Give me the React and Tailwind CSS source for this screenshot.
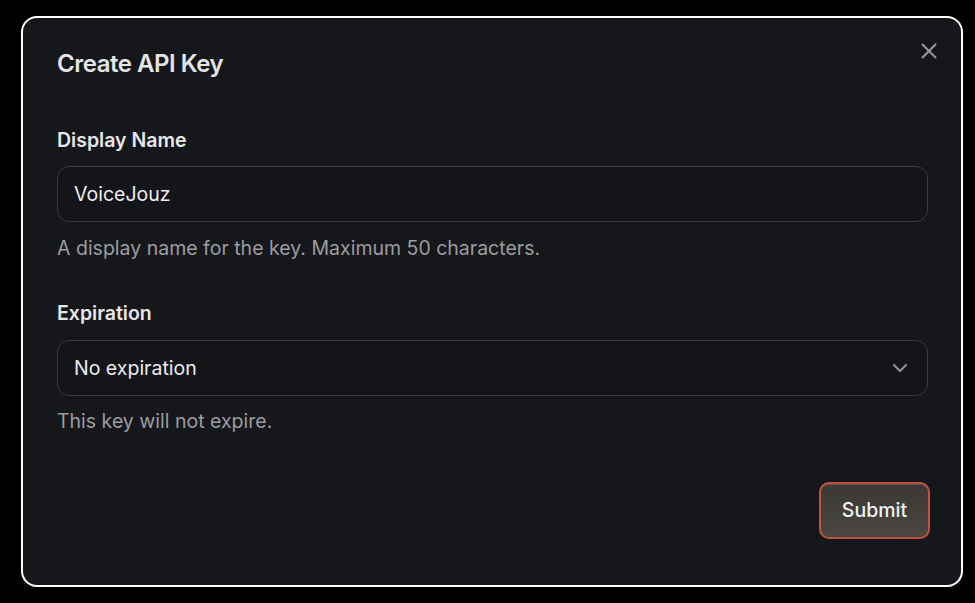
import { X, ChevronDown } from 'lucide-react'

const labelCls = 'block text-[19.5px] leading-[27px] font-semibold text-[#e6e6e8]'
const fieldCls = 'w-full h-[56px] px-[16px] pt-[2px] rounded-[12px] border border-[#3a3b40] bg-[#141519] text-[19.5px] text-[#ececee] flex items-center'
const helpCls = 'text-[19.5px] leading-[27px] text-[#9c9ca1]'

export default function App() {
  return (
    <div className="w-[975px] h-[603px] bg-black pt-[16px] pl-[21px]" style={{ fontFamily: 'Inter, "Noto Sans", sans-serif' }}>
      <div className="relative w-[942px] h-[571px] rounded-[16px] border-2 border-white bg-[#16171b] pt-[30px] pl-[34px] pr-[31px]">
        <button className="absolute top-[20px] right-[19px] text-[#9a9a9f]">
          <X size={26} strokeWidth={1.8} />
        </button>

        <h2 className="text-[24px] leading-[32px] font-semibold text-[#e4e4e6] tracking-[-0.02em]">Create API Key</h2>

        <div className="mt-[47px] pr-[2px]">
          <label className={labelCls}>Display Name</label>
          <div className={`${fieldCls} mt-[12px]`}>VoiceJouz</div>
          <p className={`${helpCls} mt-[13px]`}>A display name for the key. Maximum 50 characters.</p>
        </div>

        <div className="mt-[38px] pr-[2px]">
          <label className={labelCls}>Expiration</label>
          <div className={`${fieldCls} mt-[13px] justify-between`}>
            <span>No expiration</span>
            <ChevronDown size={24} strokeWidth={2.2} className="text-[#8d8d92] -mr-[1px] -mt-[2px]" />
          </div>
          <p className={`${helpCls} mt-[12px]`}>This key will not expire.</p>
        </div>

        <div className="flex justify-end mt-[47px]">
          <button className="w-[111px] h-[57px] rounded-[10px] border-2 border-[#c2513f] bg-gradient-to-b from-[#3b3835] to-[#4a4641] text-[19.5px] font-medium text-[#eef0f4] shadow-[inset_0_1px_0_rgba(255,255,255,0.15)]">
            Submit
          </button>
        </div>
      </div>
    </div>
  )
}
